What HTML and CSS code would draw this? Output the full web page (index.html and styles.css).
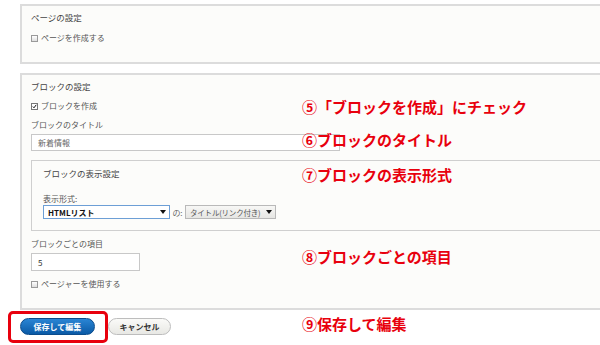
FILE: index.html
```html
<!DOCTYPE html>
<html lang="ja">
<head>
    <meta charset="UTF-8">
    <meta name="viewport" content="width=device-width, initial-scale=1.0">
    <title>ブロックの設定</title>
    <link rel="stylesheet" href="styles.css">
</head>

<body>

    <div class="page">

        <!-- Page settings -->
        <div class="panel panel-page">
            <div class="panel-title">ページの設定</div>
            <label class="check-row"><span class="cb"></span>ページを作成する</label>
        </div>

        <!-- Block settings -->
        <div class="panel panel-block">
            <div class="panel-title">ブロックの設定</div>
            <label class="check-row"><span class="cb checked"><svg viewBox="0 0 7 7"><path d="M1.2 3.6 L2.8 5.3 L5.9 1.2" fill="none" stroke="#111" stroke-width="1.4"/></svg></span>ブロックを作成</label>

            <div class="field-label">ブロックのタイトル</div>
            <div class="text-input title-input">新着情報</div>

            <div class="sub-panel">
                <div class="panel-title">ブロックの表示設定</div>
                <div class="field-label format-label">表示形式:</div>
                <div class="select-row">
                    <div class="select select-main"><span>HTMLリスト</span><span class="arrow"></span></div>
                    <span class="of">の:</span>
                    <div class="select select-sub"><span>タイトル(リンク付き)</span><span class="arrow"></span></div>
                </div>
            </div>

            <div class="field-label items-label">ブロックごとの項目</div>
            <div class="text-input count-input">5</div>
            <label class="check-row pager-row"><span class="cb"></span>ページャーを使用する</label>
        </div>

        <div class="actions">
            <button class="btn btn-save">保存して編集</button>
            <button class="btn btn-cancel">キャンセル</button>
        </div>

        <!-- Callouts over the screenshot -->
        <div class="note note-5">⑤「ブロックを作成」にチェック</div>
        <div class="note note-6">⑥ブロックのタイトル</div>
        <div class="note note-7">⑦ブロックの表示形式</div>
        <div class="note note-8">⑧ブロックごとの項目</div>
        <div class="note note-9">⑨保存して編集</div>
        <div class="save-mark"></div>

    </div>

</body>

</html>
```

FILE: styles.css
```css
body {
    margin: 0;
    background-color: #ffffff;
    font-family: "Noto Sans CJK JP", "Noto Sans", sans-serif;
    font-size: 8px;
    color: #555;
    overflow: hidden;
}

.page {
    position: relative;
    width: 600px;
    height: 345px;
    padding-left: 20px;
    box-sizing: border-box;
    overflow: hidden;
}

.panel {
    width: 620px;
    background-color: #fcfcfa;
    border: 2px solid #dcdcdc;
    padding: 5px 0 18px 9px;
    box-sizing: border-box;
}

.panel-page {
    margin-top: 4px;
}

.panel-block {
    margin-top: 9px;
}

.panel-title {
    line-height: 12px;
    height: 12px;
    color: #444;
    font-size: 8.5px;
}

.check-row {
    display: flex;
    align-items: center;
    gap: 3px;
    height: 12px;
    line-height: 12px;
    margin-top: 9px;
}

.panel-block .check-row {
    margin-top: 8px;
}

.panel-block .pager-row {
    margin-top: 7px;
}

/* small square checkbox */
.cb {
    width: 7px;
    height: 7px;
    border: 1px solid #9a9a9a;
    background: linear-gradient(#ffffff, #dedede);
    box-sizing: border-box;
    display: flex;
}

.cb.checked {
    background: #ffffff;
    border-color: #777;
}

.cb svg {
    width: 100%;
    height: 100%;
}

.field-label {
    line-height: 12px;
    height: 12px;
    margin-top: 7px;
}

.text-input {
    margin-top: 3px;
    background-color: #ffffff;
    border: 1px solid #c8c8c8;
    box-sizing: border-box;
    padding-left: 6px;
    display: flex;
    align-items: center;
}

.title-input {
    width: 309px;
    height: 17px;
    color: #666;
}

.count-input {
    width: 109px;
    height: 18px;
    color: #333;
}

.sub-panel {
    margin-top: 9px;
    width: 600px;
    border: 1px solid #cfcfcf;
    padding: 6px 0 11px 11px;
    box-sizing: border-box;
}

.sub-panel .format-label {
    margin-top: 14px;
}

.select-row {
    display: flex;
    align-items: center;
    height: 14px;
}

.select {
    height: 14px;
    box-sizing: border-box;
    display: flex;
    align-items: center;
    justify-content: space-between;
    padding: 0 3px 0 4px;
    white-space: nowrap;
}

.select-main {
    width: 127px;
    border: 1px solid #6d9fd6;
    background-color: #ffffff;
    color: #111;
    font-weight: bold;
}

.select-sub {
    width: 91px;
    border: 1px solid #b9b9b9;
    background: linear-gradient(#f7f7f5, #e6e6e3);
    color: #555;
    font-size: 7.5px;
    letter-spacing: -0.2px;
}

/* small down triangle */
.arrow {
    width: 0;
    height: 0;
    border-left: 3px solid transparent;
    border-right: 3px solid transparent;
    border-top: 4px solid #111;
    flex-shrink: 0;
}

.of {
    width: 15px;
    text-align: center;
    color: #666;
}

.actions {
    display: flex;
    gap: 13px;
    margin-top: 8px;
}

.btn {
    height: 17px;
    border-radius: 9px;
    font-family: "Noto Sans CJK JP", "Noto Sans", sans-serif;
    font-size: 8px;
    font-weight: bold;
    padding: 0;
    line-height: 15px;
}

.btn-save {
    width: 75px;
    color: #ffffff;
    background: linear-gradient(#2a85d4, #0a5aa6);
    border: 1px solid #0b4c8c;
}

.btn-cancel {
    width: 63px;
    color: #333;
    background: linear-gradient(#fafaf8, #e8e8e4);
    border: 1px solid #bdbdbd;
}

/* red callouts */
.note {
    position: absolute;
    left: 302px;
    font-size: 15px;
    line-height: 16px;
    font-weight: bold;
    color: #e8000d;
    white-space: nowrap;
}

.note-5 { top: 99px; }
.note-6 { top: 132px; }
.note-7 { top: 167px; }
.note-8 { top: 249px; }
.note-9 { top: 316px; }

.save-mark {
    position: absolute;
    left: 8px;
    top: 311px;
    width: 100px;
    height: 32px;
    border: 3px solid #e8000d;
    border-radius: 5px;
    box-sizing: border-box;
}
```
